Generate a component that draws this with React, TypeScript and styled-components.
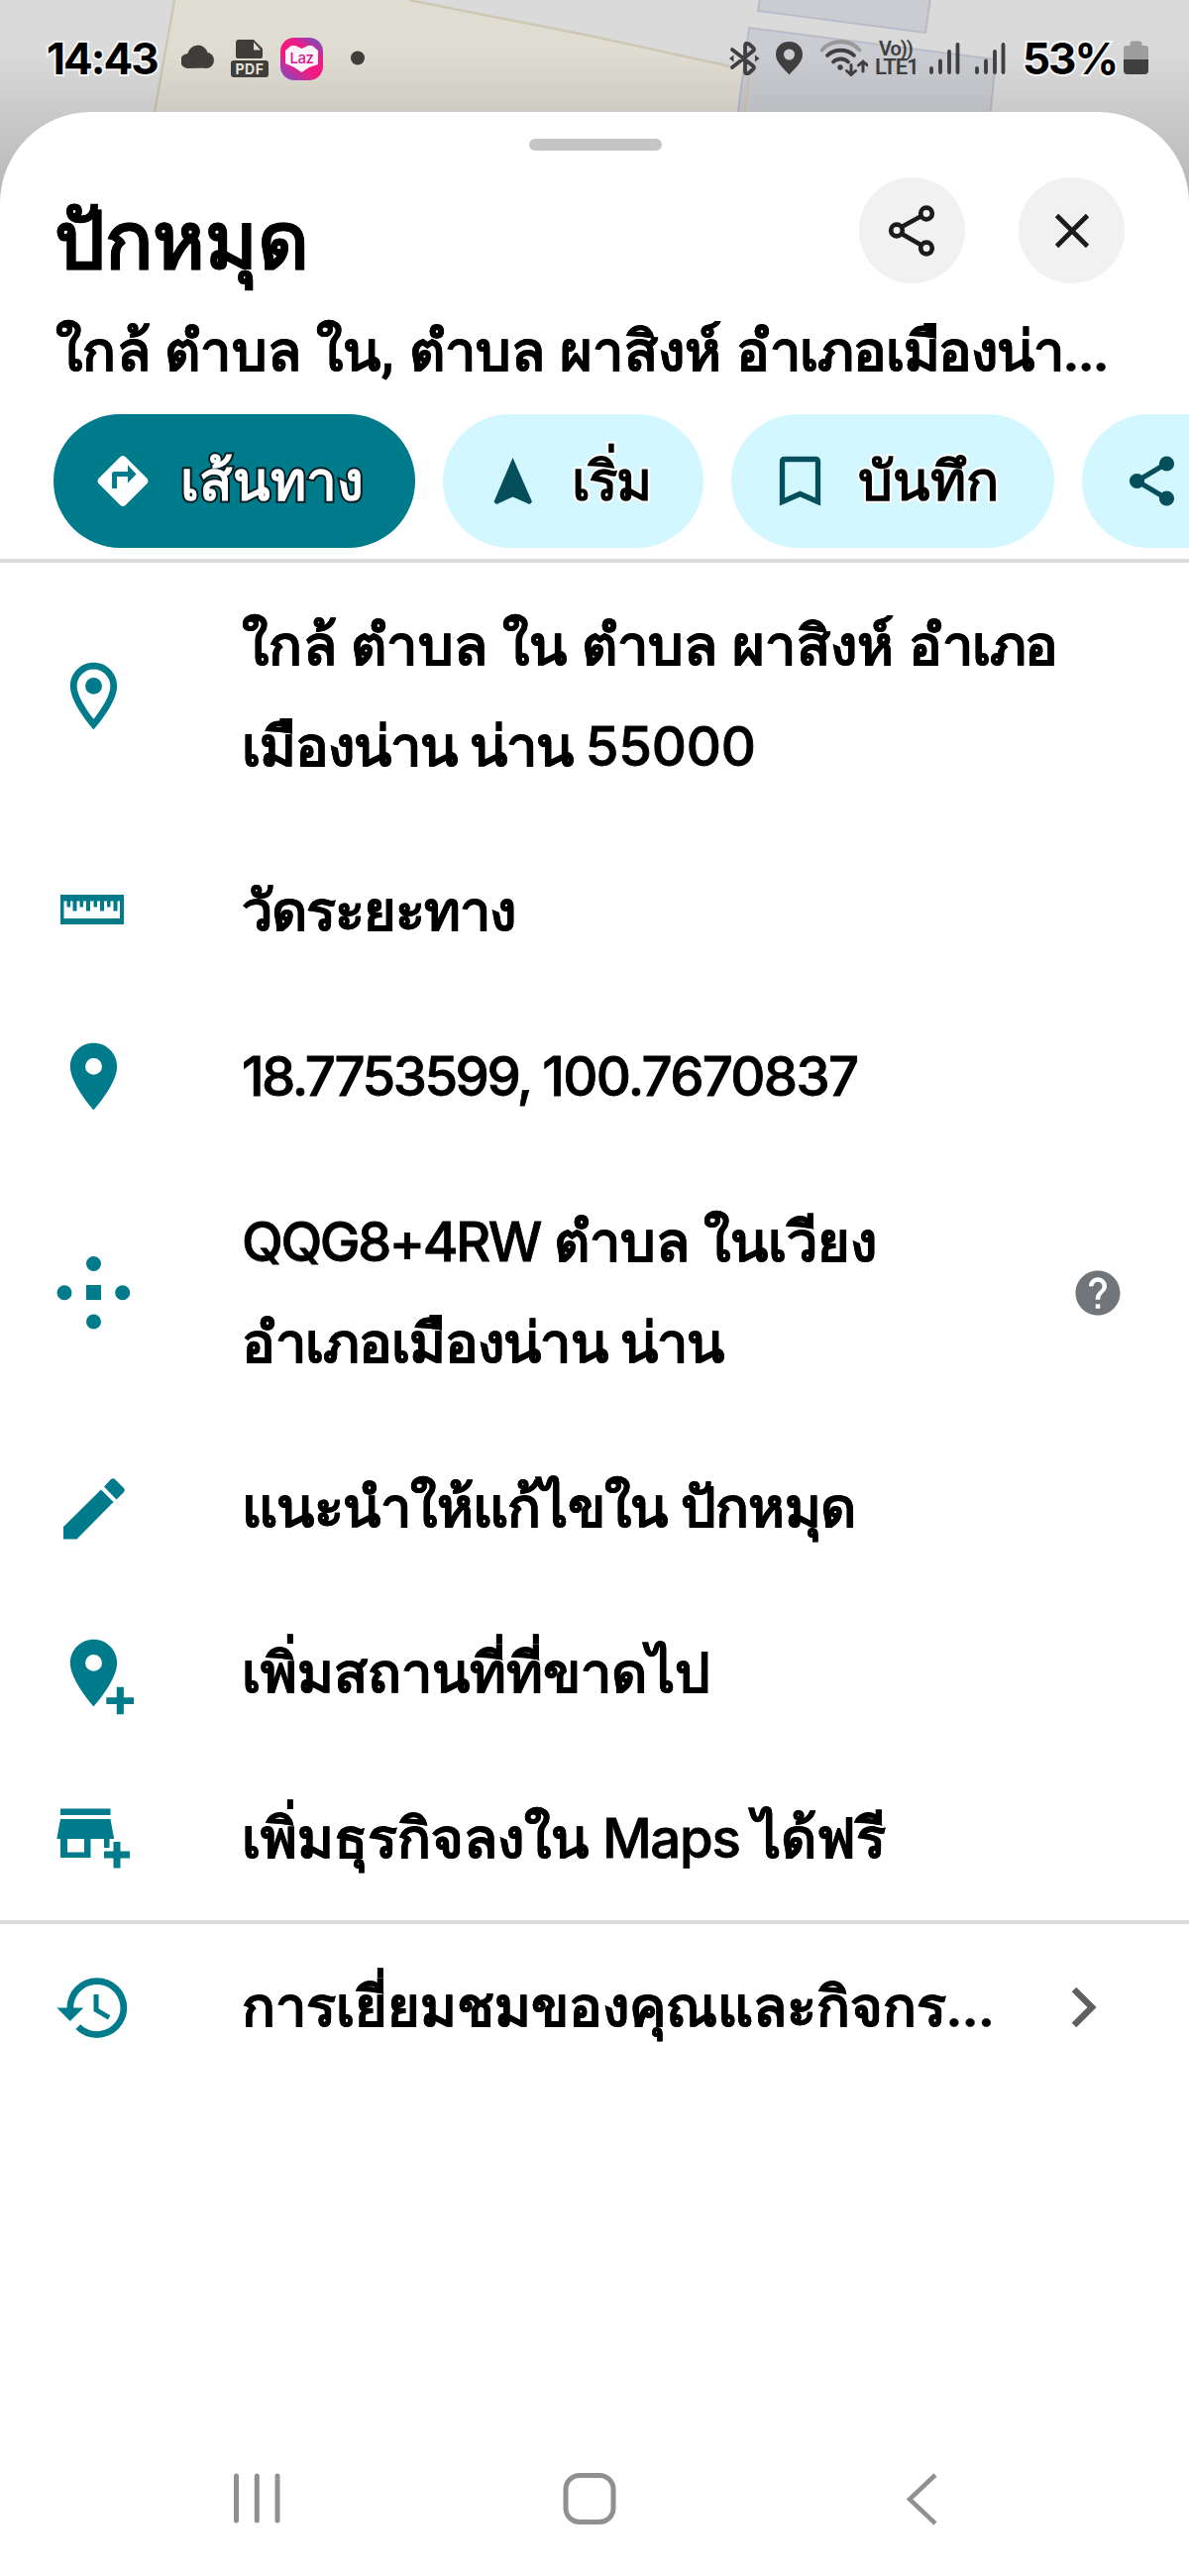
import React from 'react';
import styled, { createGlobalStyle } from 'styled-components';

const teal = '#007b8b';
const deepTeal = '#044f5b';
const dark = '#3f3f3f';

const GlobalStyle = createGlobalStyle`
  * { box-sizing: border-box; }
  body { margin: 0; background: #fff; }
`;

const Screen = styled.div`
  position: relative;
  display: flex;
  flex-direction: column;
  width: 1200px;
  height: 2600px;
  overflow: hidden;
  background: #fff;
  color: #000;
  font-family: Roboto, "Noto Sans", sans-serif;
  font-weight: 700;
`;

const MapBackdrop = styled.svg`
  position: absolute;
  top: 0;
  left: 0;
`;

const StatusBar = styled.header`
  position: relative;
  display: flex;
  justify-content: space-between;
  align-items: flex-start;
  height: 113px;
  padding: 35px 41px 0 47px;
`;

const StatusGroup = styled.div`
  display: flex;
  height: 48px;
  align-items: center;
`;

const StatusText = styled.span<{ $w: number }>`
  width: ${p => p.$w}px;
  font: 700 44px/48px Inter, sans-serif;
  letter-spacing: -2px;
  white-space: nowrap;
  -webkit-text-stroke: 4px rgba(255, 255, 255, 0.75);
  paint-order: stroke fill;
`;

const NetworkLabel = styled.span`
  display: flex;
  flex-direction: column;
  width: 44px;
  margin: 0 11px 0 7px;
  color: #3f3f3f;
  font: 600 22px/20px Roboto, sans-serif;
  letter-spacing: -1px;
  white-space: nowrap;
`;

const Volte = styled.span`
  padding-left: 4px;
  font-size: 20px;
  line-height: 18px;
`;

const PdfBadge = styled.div`
  display: flex;
  flex-direction: column;
  align-items: center;
  gap: 2px;
  width: 38px;
  margin-left: 17px;
`;

const PdfLabel = styled.span`
  width: 38px;
  height: 17px;
  border-radius: 3px;
  background: #403e3a;
  color: #e6e4dc;
  font: 700 14px/17px Inter, sans-serif;
  letter-spacing: 0.5px;
  text-align: center;
`;

const LazBadge = styled.div`
  position: relative;
  display: flex;
  justify-content: center;
  align-items: center;
  width: 43px;
  height: 43px;
  margin: 0 28px 0 12px;
  border-radius: 14px;
  background: linear-gradient(215deg, #7d4bbd 8%, #f01a83 34%, #f01a83 62%, #8a49bb 92%);
`;

const LazHeart = styled.svg`
  position: absolute;
  top: 7px;
  left: 4px;
`;

const LazText = styled.span`
  position: relative;
  color: #d4188c;
  font: 500 15px/20px Inter, sans-serif;
  letter-spacing: -0.4px;
`;

const Sheet = styled.main`
  position: relative;
  display: flex;
  flex: 1;
  flex-direction: column;
  border-radius: 92px 92px 0 0;
  background: #fff;
`;

const Handle = styled.div`
  width: 134px;
  height: 12px;
  margin: 27px auto 0 534px;
  border-radius: 6px;
  background: #c5c5c5;
`;

const TitleRow = styled.div`
  display: flex;
  gap: 54px;
  height: 134px;
  padding: 27px 65px 0 55px;
`;

const Title = styled.h1`
  flex: 1;
  margin: 0;
  font-size: 80px;
  font-weight: 700;
  line-height: 130px;
  -webkit-text-stroke: 0.4px #000;
`;

const RoundButton = styled.button`
  display: flex;
  justify-content: center;
  align-items: center;
  width: 107px;
  height: 107px;
  padding: 0;
  border: 0;
  border-radius: 50%;
  background: #f1f1f1;
`;

const Subtitle = styled.p`
  height: 132px;
  margin: 0;
  padding: 22px 0 0 56px;
  font-size: 56px;
  line-height: 94px;
  white-space: nowrap;
  -webkit-text-stroke: 0.3px #000;
`;

const Chips = styled.div`
  display: flex;
  gap: 28px;
  height: 146px;
  padding-left: 54px;
  overflow: hidden;
`;

const Chip = styled.button<{ $primary?: boolean; $w: number; $gap: number }>`
  display: flex;
  flex: none;
  align-items: center;
  gap: ${p => p.$gap}px;
  width: ${p => p.$w}px;
  height: 135px;
  padding: 0 0 0 44px;
  border: 0;
  border-radius: 68px;
  background: ${p => (p.$primary ? teal : '#d2f7ff')};
  color: ${p => (p.$primary ? '#fff' : '#000')};
  font: 700 55px/94px Roboto, "Noto Sans", sans-serif;
  white-space: nowrap;
  -webkit-text-stroke: 4px ${p => (p.$primary ? '#00191d' : '#fff')};
  paint-order: stroke fill;
`;

const Divider = styled.hr`
  width: 100%;
  height: 4px;
  margin: 0;
  border: 0;
  background: #dcdcdc;
`;

const Row = styled.div`
  display: flex;
  align-items: center;
  padding: 33px 65px 32px 54px;
`;

const RowIcon = styled.div`
  display: flex;
  width: 190px;
  height: 81px;
`;

const RowText = styled.div`
  flex: 1;
  margin: 1px 0 -1px;
  font-size: 56px;
  line-height: 101.7px;
  white-space: nowrap;
  -webkit-text-stroke: 0.3px #000;
`;

const Line = styled.div<{ $track?: number }>`
  letter-spacing: ${p => p.$track ?? 0}px;
`;

const Thai = styled.span<{ $track: number }>`
  letter-spacing: ${p => p.$track}px;
`;

const Latin = styled.span<{ $track?: number }>`
  font-family: Inter, sans-serif;
  font-size: 54.5px;
  font-weight: 500;
  line-height: 1;
  letter-spacing: ${p => p.$track ?? 0}px;
  -webkit-text-stroke: 0.8px #000;
`;

const NavBar = styled.nav`
  display: grid;
  grid-template-columns: 331px 347px 34px;
  align-items: center;
  margin-top: auto;
  height: 156px;
  padding-left: 236px;
`;

const GlyphSvg = styled.svg`
  flex: none;
`;

/* Each glyph is drawn in screen units; box = "x y width height". */
const Glyph = ({ box, children }: { box: string; children: React.ReactNode }) => {
  const [, , w, h] = box.split(' ').map(Number);
  return <GlyphSvg width={w} height={h} viewBox={box}>{children}</GlyphSvg>;
};

const Pin = ({ plus }: { plus?: boolean }) => (
  <svg width="81" height="81" viewBox="0 0 24 24" overflow="visible">
    <path fill={teal} d="M12 2C8.13 2 5 5.13 5 9c0 5.25 7 13 7 13s7-7.75 7-13c0-3.87-3.13-7-7-7zm0 9.5a2.5 2.5 0 0 1 0-5 2.5 2.5 0 0 1 0 5z" />
    {plus && <path fill={teal} d="M18.900 16.200h2.100v3.100h3v2h-3v3.100h-2.100v-3.100h-3.100v-2h3.100z" />}
  </svg>
);

const MapArt = () => (
  <MapBackdrop width="1200" height="260" viewBox="0 0 1200 260">
    <defs>
      <linearGradient id="shade" x1="0" y1="0" x2="0" y2="1">
        <stop offset="0.2" stopColor="#000" stopOpacity="0" />
        <stop offset="0.45" stopColor="#000" stopOpacity="0.08" />
        <stop offset="0.8" stopColor="#000" stopOpacity="0.17" />
      </linearGradient>
    </defs>
    <path fill="#dadada" d="M0 0h1200v260H0z" />
    <path fill="#dfdcd2" d="M176 0h237l187 37 135 30 21 0-11 46v20H153v-20z" />
    <path fill="none" stroke="#cec7b5" strokeWidth="2.500" d="M176 0 156 113M413 0l187 37 137 30" />
    <path fill="#cbccd1" stroke="#b9bbc9" strokeWidth="2" d="m756 28 249 32-6 60H744z" />
    <path fill="#cbccd1" stroke="#b9bbc9" strokeWidth="2" d="m767-2-2 13 169 22 5-35z" />
    <path stroke="#d3c3ae" strokeWidth="2" d="m756 78-5 38" />
    <path fill="url(#shade)" d="M0 0h1200v260H0z" />
  </MapBackdrop>
);

const SignalBars = ({ tail }: { tail: number }) => (
  <Glyph box={`0 0 ${32 + tail} 48`}>
    <path stroke={dark} strokeWidth="3.800" strokeLinecap="round" d="M2 34v4M11 26.500v11.500M20 17v21M28.500 10v28" />
  </Glyph>
);

export default function App() {
  return (
    <Screen>
      <GlobalStyle />
      <MapArt />
      <StatusBar>
        <StatusGroup>
          <StatusText $w={136}>14:43</StatusText>
          <Glyph box="183 35 33 48">
            <circle cx="208" cy="61" r="8" fill="#5d5b57" />
            <path fill="#403e3a" d="M190 69a7.500 7.500 0 0 1-.5-15 10.300 10.300 0 0 1 20-1 8 8 0 0 1 0 15.500z" />
          </Glyph>
          <PdfBadge>
            <Glyph box="0 0 28 19">
              <path fill="#403e3a" fillRule="evenodd" d="M3 0h15l9 9v8a2 2 0 0 1-2 2H2a2 2 0 0 1-2-2V3a3 3 0 0 1 3-3zm15 2.500v8h7z" />
            </Glyph>
            <PdfLabel>PDF</PdfLabel>
          </PdfBadge>
          <LazBadge>
            <LazHeart width="35" height="29" viewBox="0 0 35 29">
              <path fill="#fff3fa" d="M7 1h4l6.500 3L24 1h4l6 5v14l-9 3-7.500 5L10 23l-9-4V6z" />
            </LazHeart>
            <LazText>Laz</LazText>
          </LazBadge>
          <Glyph box="354 35 14 48"><circle cx="361" cy="58.500" r="7" fill="#403e3a" /></Glyph>
        </StatusGroup>
        <StatusGroup>
          <Glyph box="735 35 47 48">
            <path fill="none" stroke={dark} strokeWidth="3.800" strokeLinejoin="round" strokeLinecap="round" d="m738 50 21 16.500q2 1.500 0 3.500l-4 3.500q-4 2-4-1.500V46q0-3.500 4-1.500l4 3.500q2 2 0 3.500L738 68" />
            <path fill={dark} d="m735 59 4.500-3.500v7zM765.500 59l-4.500-3.500v7z" />
          </Glyph>
          <Glyph box="784 35 45 48">
            <path fill={dark} fillRule="evenodd" d="M797.500 42C789 42 784 48 784 55c0 8 8 14 13.500 20.500C803 69 811 63 811 55c0-7-5-13-13.500-13zm0 7.500a5.500 5.500 0 1 1 0 11 5.500 5.500 0 0 1 0-11z" />
          </Glyph>
          <Glyph box="829 35 48 48">
            <g fill="none" strokeLinecap="round" strokeWidth="3.800">
              <path stroke="#999" d="M830.500 50.500c9-11 29-11 38 0" />
              <path stroke={dark} d="M836 56c7-7 20-7 27 0M842 62.500c4-4 11-4 15 0" />
              <path stroke={dark} strokeWidth="3" d="M860 65.500v10m-4.500-4 4.500 4 4.500-4M872 72V62m-4.500 4 4.500-4 4.500 4" />
            </g>
            <circle cx="849" cy="68" r="2.700" fill={dark} />
          </Glyph>
          <NetworkLabel><Volte>Vo))</Volte><span>LTE1</span></NetworkLabel>
          <SignalBars tail={14} />
          <SignalBars tail={16} />
          <StatusText $w={102}>53%</StatusText>
          <Glyph box="1134 35 25 48">
            <path fill="#9d9d9d" d="M1134 60V49q0-3 3-3h3.500v-2q0-2.500 2.500-2.500h7q2.500 0 2.500 2.500v2h3.500q3 0 3 3v11z" />
            <path fill={dark} d="M1134 60h25v11q0 4-4 4h-17q-4 0-4-4z" />
          </Glyph>
        </StatusGroup>
      </StatusBar>

      <Sheet>
        <Handle />
        <TitleRow>
          <Title>ปักหมุด</Title>
          <RoundButton aria-label="แชร์">
            <Glyph box="890 202 60 61">
              <g fill="none" stroke="#1b1b1b" strokeWidth="4.700">
                <path d="m909 229 20-11M909 236l20 11.500" />
                <circle cx="934" cy="215.500" r="5.800" />
                <circle cx="904" cy="232.500" r="5.800" />
                <circle cx="934" cy="250.500" r="5.800" />
              </g>
            </Glyph>
          </RoundButton>
          <RoundButton aria-label="ปิด">
            <Glyph box="0 0 36 36"><path stroke="#1b1b1b" strokeWidth="4.700" d="m2.500 2.500 31 31m0-31-31 31" /></Glyph>
          </RoundButton>
        </TitleRow>
        <Subtitle>
          <Thai $track={0.35}>ใกล้ ตำบล ใน, ตำบล ผาสิงห์ </Thai>
          <Thai $track={-1.1}>อำเภอเมืองน่า...</Thai>
        </Subtitle>

        <Chips>
          <Chip $primary $w={365} $gap={32}>
            <Glyph box="99 460 52 53">
              <path fill="#fff" stroke="none" fillRule="evenodd" d="M122.500 462q2.500-2 5 0l22 22q2 2.500 0 5l-22 22q-2.500 2-5 0l-22-22q-2-2.500 0-5zM114 494h5v-12h11v6.500l8.500-9-8.500-9v6.500h-13.500q-2.500 0-2.500 2.500z" />
            </Glyph>
            เส้นทาง
          </Chip>
          <Chip $w={263} $gap={33}>
            <Glyph box="491 460 53 52"><path fill={deepTeal} stroke="none" d="m517.500 462 19.500 44.500-2.500 2.500-17-7.500-16.500 7.500-2.500-2.500z" /></Glyph>
            <Thai $track={-1.800}>เริ่ม</Thai>
          </Chip>
          <Chip $w={326} $gap={32}>
            <Glyph box="782 458 52 54"><path fill="none" stroke={deepTeal} strokeWidth="5.300" d="M789.500 505.500V465q0-2.500 2.500-2.500h31q2.500 0 2.500 2.500v40.500l-18-8z" /></Glyph>
            บันทึก
          </Chip>
          <Chip $w={326} $gap={33} aria-label="แชร์">
            <Glyph box="1134 458 52 54">
              <path fill="none" stroke={deepTeal} strokeWidth="5" d="m1175 467-29.500 17.500L1175 502" />
              <g fill={deepTeal} stroke="none">
                <circle cx="1175.500" cy="467" r="7.600" /><circle cx="1145.500" cy="484.500" r="7.600" /><circle cx="1175.500" cy="502" r="7.600" />
              </g>
            </Glyph>
          </Chip>
        </Chips>
        <Divider />

        <Row>
          <RowIcon>
            <svg width="81" height="81" viewBox="0 0 24 24">
              <path fill={teal} fillRule="evenodd" d="M12 2C8.130 2 5 5.130 5 9c0 5.250 7 13 7 13s7-7.750 7-13c0-3.870-3.130-7-7-7zM7 9c0-2.760 2.240-5 5-5s5 2.240 5 5c0 2.880-2.880 7.190-5 9.880C9.920 16.210 7 11.850 7 9z" />
              <circle cx="12" cy="9" r="2.500" fill={teal} />
            </svg>
          </RowIcon>
          <RowText>
            <Line><Thai $track={0.35}>ใกล้ ตำบล ใน ตำบล ผาสิงห์ </Thai><Thai $track={-1.200}>อำเภอ</Thai></Line>
            <Line $track={-1}>เมืองน่าน น่าน <Latin $track={-0.200}>55000</Latin></Line>
          </RowText>
        </Row>
        <Row>
          <RowIcon>
            <Glyph box="54 879 81 81">
              <path fill={teal} fillRule="evenodd" d="M61 902h64v30H61zm3.500 6.500V926h56.500v-17.500h-2.500v10h-4v-10h-3v6h-3.500v-6h-3v10h-4v-10h-3v6h-3.500v-6H91v10h-4v-10h-3v6h-3.500v-6h-3v10h-4v-10h-2.500v6h-3.500v-6z" />
            </Glyph>
          </RowIcon>
          <RowText><Line $track={-1}>วัดระยะทาง</Line></RowText>
        </Row>
        <Row>
          <RowIcon><Pin /></RowIcon>
          <RowText><Line><Latin $track={-2.500}>18.7753599, </Latin><Latin $track={-1.700}>100.7670837</Latin></Line></RowText>
        </Row>
        <Row>
          <RowIcon>
            <Glyph box="54 1264 81 81">
              <g fill={teal}>
                <circle cx="94.500" cy="1275.500" r="7.500" /><circle cx="94.500" cy="1334" r="7.500" />
                <circle cx="65" cy="1304.800" r="7.500" /><circle cx="123.700" cy="1304.800" r="7.500" />
                <path d="M87 1297h15v15H87z" />
              </g>
            </Glyph>
          </RowIcon>
          <RowText>
            <Line><Latin $track={-2.500}>QQG8+4RW</Latin> ตำบล ในเวียง</Line>
            <Line $track={-0.950}>อำเภอเมืองน่าน น่าน</Line>
          </RowText>
          <svg width="54" height="54" viewBox="0 0 24 24">
            <path fill="#70757a" d="M12 2C6.480 2 2 6.480 2 12s4.480 10 10 10 10-4.480 10-10S17.520 2 12 2zm1 17h-2v-2h2v2zm2.070-7.750-.9.920C13.450 12.900 13 13.500 13 15h-2v-.5c0-1.100.45-2.100 1.170-2.830l1.240-1.260c.37-.36.59-.86.59-1.410 0-1.100-.9-2-2-2s-2 .9-2 2H8c0-2.210 1.790-4 4-4s4 1.790 4 4c0 .88-.36 1.680-.93 2.250z" />
          </svg>
        </Row>
        <Row>
          <RowIcon>
            <Glyph box="54 1481 81 81">
              <path fill={teal} d="m64 1540 38-37.500 12.500 12.500-37 37.500H64zm41-40.500 7-7.500q2-1.500 4 0l9 9q1.500 2 0 4l-7.500 7.500z" />
            </Glyph>
          </RowIcon>
          <RowText><Line $track={-0.700}>แนะนำให้แก้ไขใน ปักหมุด</Line></RowText>
        </Row>
        <Row>
          <RowIcon><Pin plus /></RowIcon>
          <RowText><Line>เพิ่มสถานที่ที่ขาดไป</Line></RowText>
        </Row>
        <Row>
          <RowIcon>
            <Glyph box="54 1815 81 81">
              <path fill={teal} fillRule="evenodd" d="M61 1825.500h50.500v6.500H61zM61 1836h50.500l3.500 19v1h-4.500v9H105v-9H91.500v19H61v-19h-3.500v-1zM68 1856v13.500h17V1856zM114.500 1859h7v9.500h9.500v7h-9.500v10h-7v-10H105v-7h9.500z" />
            </Glyph>
          </RowIcon>
          <RowText><Line>เพิ่มธุรกิจลงใน <Latin $track={-1.300}>Maps</Latin> ได้ฟรี</Line></RowText>
        </Row>
        <Divider />
        <Row>
          <RowIcon>
            <svg width="81" height="81" viewBox="0 0 24 24">
              <path fill={teal} d="M13 3a9 9 0 0 0-9 9H1l3.890 3.890.07.14L9 12H6c0-3.870 3.130-7 7-7s7 3.130 7 7-3.130 7-7 7c-1.930 0-3.680-.79-4.940-2.060l-1.420 1.420A8.954 8.954 0 0 0 13 21a9 9 0 0 0 0-18zm-1 5v5l4.280 2.540.72-1.210-3.500-2.080V8z" />
            </svg>
          </RowIcon>
          <RowText><Line>การเยี่ยมชมของคุณและกิจกร...</Line></RowText>
          <Glyph box="1080 2000 55 50"><path fill="none" stroke="#5f5f5f" strokeWidth="6.500" d="m1084 2007 18 18-18 18" /></Glyph>
        </Row>

        <NavBar>
          <Glyph box="236 2496 50 54"><path stroke="#909090" strokeWidth="5" strokeLinecap="round" d="M238.500 2500v45M259.300 2500v45M280 2500v45" /></Glyph>
          <Glyph box="567 2494 56 56"><rect x="571" y="2498.500" width="48" height="47" rx="14" fill="none" stroke="#909090" strokeWidth="5" /></Glyph>
          <Glyph box="914 2494 34 56"><path fill="none" stroke="#909090" strokeWidth="4.500" d="m944 2498-26 24.500 26 24.500" /></Glyph>
        </NavBar>
      </Sheet>
    </Screen>
  );
}
